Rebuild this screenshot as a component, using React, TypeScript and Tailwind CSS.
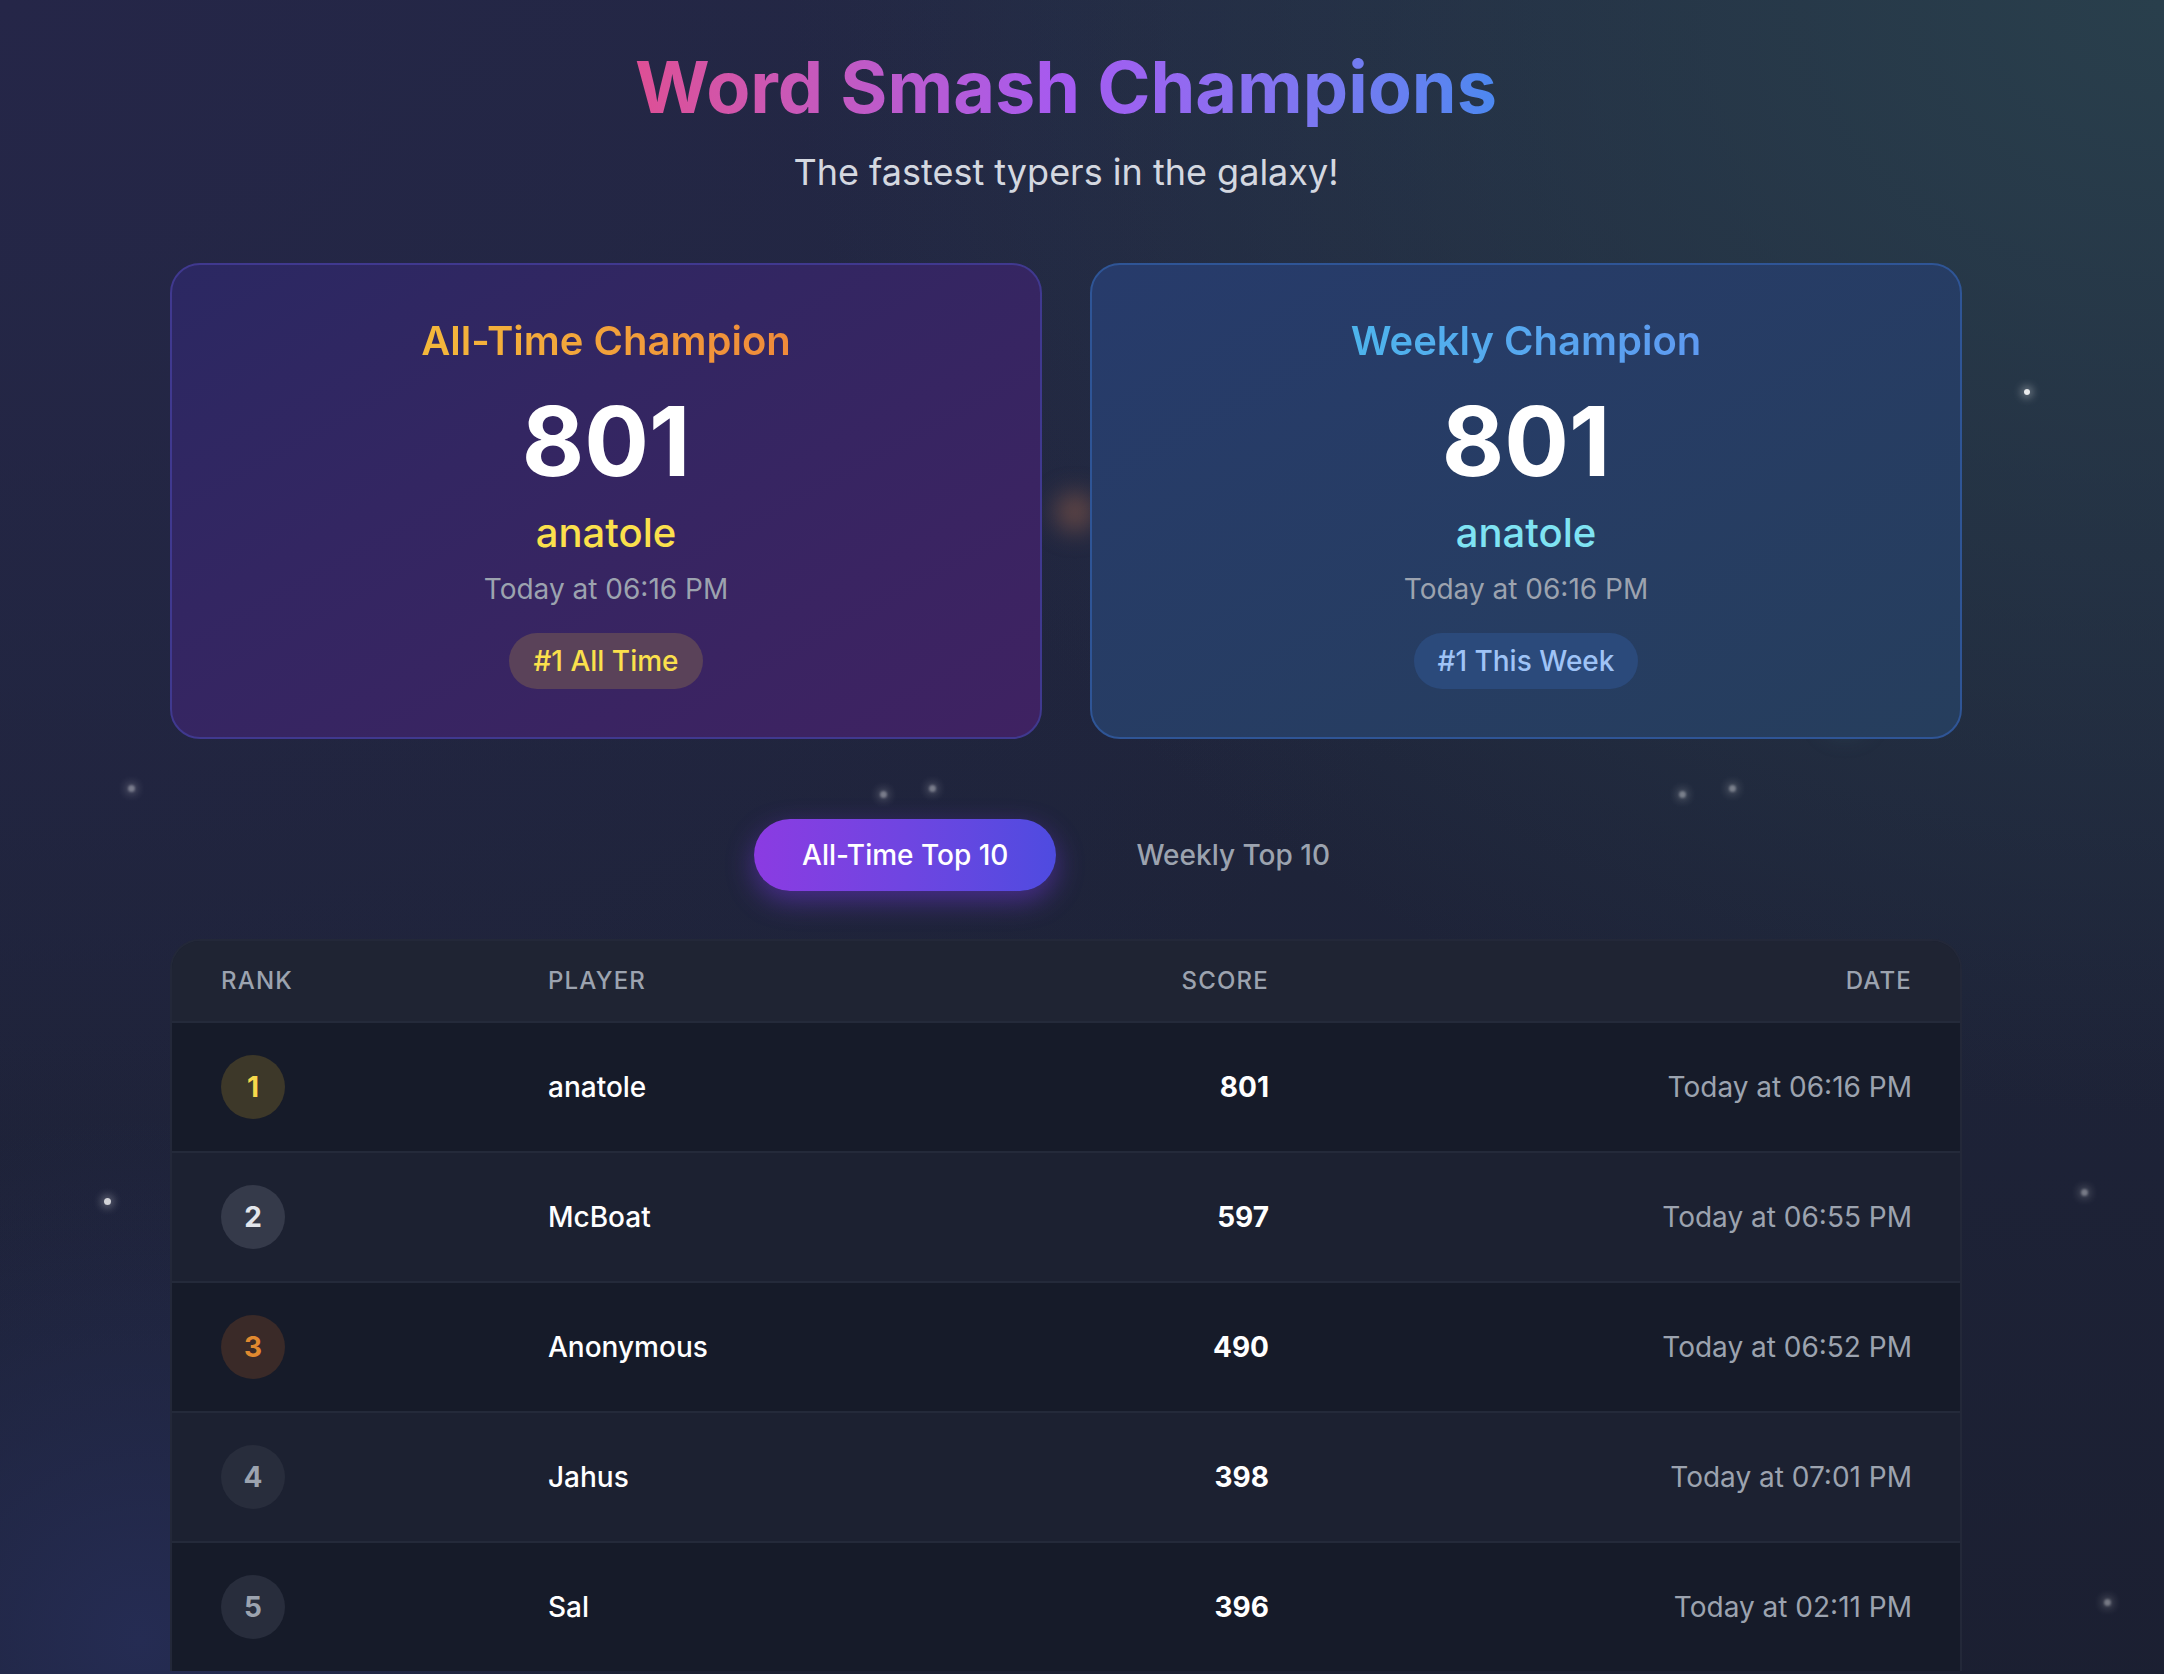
import React from "react";

type Row = {
    rank: number,
    name: string,
    score: number,
    date: string,
}

const rows: Row[] = [
    { rank: 1, name: "anatole", score: 801, date: "Today at 06:16 PM" },
    { rank: 2, name: "McBoat", score: 597, date: "Today at 06:55 PM" },
    { rank: 3, name: "Anonymous", score: 490, date: "Today at 06:52 PM" },
    { rank: 4, name: "Jahus", score: 398, date: "Today at 07:01 PM" },
    { rank: 5, name: "Sal", score: 396, date: "Today at 02:11 PM" },
];

const rankStyle: Record<number, string> = {
    1: "bg-[#3d3829] text-[#f7d94c]",
    2: "bg-[#353a4a] text-[#e3e6ec]",
    3: "bg-[#3a2a28] text-[#e0892f]",
};

// little twinkly stars, sharp ones and blurry ones
const stars = [
    "left-[2024px] top-[389px] w-[6px] h-[6px] bg-white/90 shadow-[0_0_8px_3px_rgba(255,255,255,0.35)]",
    "left-[128px] top-[785px] w-[7px] h-[7px] bg-white/40 blur-[1px] shadow-[0_0_8px_3px_rgba(255,255,255,0.2)]",
    "left-[880px] top-[791px] w-[7px] h-[7px] bg-white/40 blur-[1px] shadow-[0_0_8px_3px_rgba(255,255,255,0.2)]",
    "left-[929px] top-[785px] w-[7px] h-[7px] bg-white/40 blur-[1px] shadow-[0_0_8px_3px_rgba(255,255,255,0.2)]",
    "left-[1679px] top-[791px] w-[7px] h-[7px] bg-white/40 blur-[1px] shadow-[0_0_8px_3px_rgba(255,255,255,0.2)]",
    "left-[1729px] top-[785px] w-[7px] h-[7px] bg-white/40 blur-[1px] shadow-[0_0_8px_3px_rgba(255,255,255,0.2)]",
    "left-[104px] top-[1198px] w-[7px] h-[7px] bg-white/80 shadow-[0_0_9px_3px_rgba(255,255,255,0.3)]",
    "left-[2081px] top-[1189px] w-[7px] h-[7px] bg-white/40 blur-[1px] shadow-[0_0_8px_3px_rgba(255,255,255,0.2)]",
    "left-[2104px] top-[1599px] w-[7px] h-[7px] bg-white/40 blur-[1px] shadow-[0_0_8px_3px_rgba(255,255,255,0.2)]",
    "left-[1055px] top-[492px] w-[40px] h-[40px] bg-[#8a5a48]/60 blur-[12px]",
    "left-[521px] top-[376px] w-[22px] h-[22px] bg-white/10 blur-[8px]",
    "left-[1319px] top-[381px] w-[22px] h-[22px] bg-white/10 blur-[8px]",
    "left-[1825px] top-[693px] w-[40px] h-[40px] bg-[#3f6a7a]/40 blur-[12px]",
];

const ChampionCard = ({ weekly }: { weekly: boolean }) => (
    <div className={weekly
        ? "flex flex-col items-center rounded-[30px] border-2 border-[#2f5596] bg-gradient-to-br from-[#273b6b] to-[#263e5d] px-[48px] pt-[48px] pb-[48px]"
        : "flex flex-col items-center rounded-[30px] border-2 border-[#40398f] bg-gradient-to-br from-[#2b2862] to-[#3f2262] px-[48px] pt-[48px] pb-[48px]"}>
        <h2 className={weekly
            ? "inline-block bg-gradient-to-r from-[#4db4ec] to-[#5e9af1] bg-clip-text text-[40px] leading-[56px] font-semibold text-transparent"
            : "inline-block bg-gradient-to-r from-[#f4b83b] to-[#ef8a3a] bg-clip-text text-[40px] leading-[56px] font-semibold text-transparent"}>
            {weekly ? "Weekly Champion" : "All-Time Champion"}
        </h2>
        <p className="mt-[24px] text-[96px] leading-[96px] font-bold text-white">801</p>
        <p className={weekly
            ? "mt-[16px] text-[40px] leading-[56px] font-medium text-[#7fe3f3]"
            : "mt-[16px] text-[40px] leading-[56px] font-medium text-[#fbe04c]"}>anatole</p>
        <p className="mt-[8px] text-[28px] leading-[40px] text-[#9ca3af]">Today at 06:16 PM</p>
        <span className={weekly
            ? "mt-[24px] rounded-full bg-[#2b4a7b] px-[24px] py-[8px] text-[28px] leading-[40px] font-medium text-[#9fc3f6]"
            : "mt-[24px] rounded-full bg-[#5a4259] px-[24px] py-[8px] text-[28px] leading-[40px] font-medium text-[#fbe04c]"}>
            {weekly ? "#1 This Week" : "#1 All Time"}
        </span>
    </div>
);

const App = () => {
    return (
        <div className="relative min-h-screen w-full overflow-hidden bg-[radial-gradient(ellipse_at_top_right,#293f4c_0%,transparent_45%),radial-gradient(ellipse_at_top_left,#252648_0%,transparent_55%),radial-gradient(ellipse_520px_520px_at_140px_1640px,#252c53_0%,transparent_100%),linear-gradient(to_bottom,#212841,#1b1f31)] font-[Inter,sans-serif]">
            {stars.map((s, i) => (<div key={i} className={"absolute rounded-full " + s} />))}

            <div className="relative w-[2132px] pt-[47px]">
                <div className="mx-auto w-[1792px]">
                    <header className="flex flex-col items-center">
                        <h1 className="inline-block bg-gradient-to-r from-[#de4f95] via-[#a55af1] to-[#4b88f0] bg-clip-text text-[72px] leading-[80px] font-bold text-transparent">
                            Word Smash Champions
                        </h1>
                        <p className="mt-[17px] text-[36px] leading-[56px] text-[#d4d8e0]">The fastest typers in the galaxy!</p>
                    </header>

                    <div className="mt-[63px] grid grid-cols-2 gap-[48px]">
                        <ChampionCard weekly={false} />
                        <ChampionCard weekly={true} />
                    </div>

                    <div className="mt-[80px] flex justify-center gap-[32px]">
                        <button className="rounded-full bg-gradient-to-r from-[#8b3be2] to-[#4e4be0] px-[48px] py-[16px] text-[28px] leading-[40px] font-medium text-white shadow-[0_10px_28px_rgba(124,58,237,0.45)]">
                            All-Time Top 10
                        </button>
                        <button className="rounded-full px-[48px] py-[16px] text-[28px] leading-[40px] font-medium text-[#9ca3af]">
                            Weekly Top 10
                        </button>
                    </div>

                    <div className="mt-[48px] overflow-hidden rounded-t-[30px] border-2 border-b-0 border-[#232839] bg-[#1b2030]">
                        <div className="grid grid-cols-[327px_559px_162px_1fr] bg-[#1f2433] pl-[49px] pr-[48px] py-[24px] text-[24px] leading-[32px] font-medium uppercase tracking-wider text-[#9ca3af]">
                            <div>Rank</div>
                            <div>Player</div>
                            <div className="text-right">Score</div>
                            <div className="text-right">Date</div>
                        </div>
                        {rows.map((r) => (
                            <div key={r.rank} className={r.rank % 2 === 1
                                ? "grid grid-cols-[327px_559px_162px_1fr] items-center border-t-2 border-[#242a3a] bg-[#161b29] pl-[49px] pr-[48px] py-[32px]"
                                : "grid grid-cols-[327px_559px_162px_1fr] items-center border-t-2 border-[#242a3a] bg-[#1c2131] pl-[49px] pr-[48px] py-[32px]"}>
                                <div>
                                    <div className={"flex h-[64px] w-[64px] items-center justify-center rounded-full text-[28px] font-bold " + (rankStyle[r.rank] || "bg-[#282d3c] text-[#9ca3af]")}>
                                        {r.rank}
                                    </div>
                                </div>
                                <div className="text-[28px] leading-[40px] font-medium text-white">{r.name}</div>
                                <div className="text-right text-[28px] leading-[40px] font-bold text-white">{r.score}</div>
                                <div className="text-right text-[28px] leading-[40px] text-[#9ca3af]">{r.date}</div>
                            </div>
                        ))}
                    </div>
                    <div className="h-[80px]" />
                </div>
            </div>
        </div>
    );
};

export default App;
